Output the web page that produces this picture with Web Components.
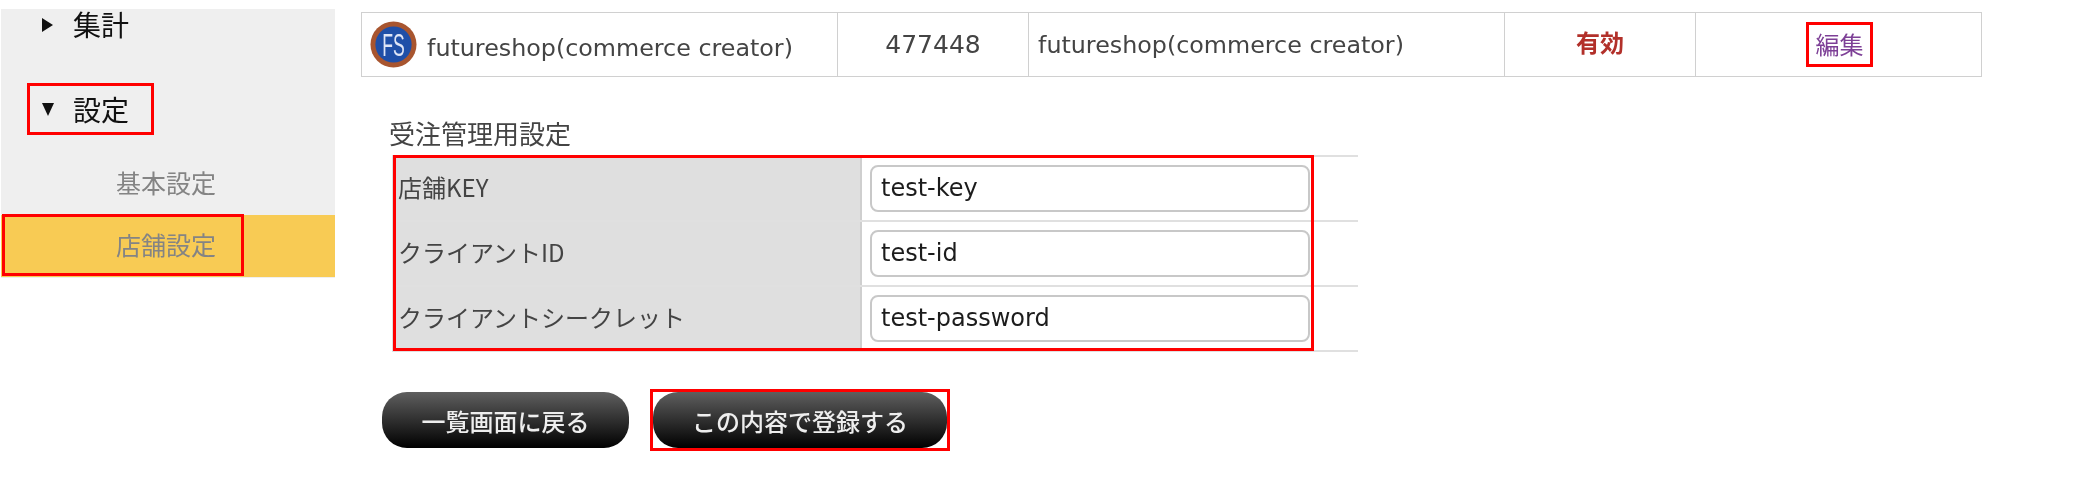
<!DOCTYPE html>
<html lang="ja">
<head>
<meta charset="utf-8">
<title>店舗設定</title>
<style>
  html, body { margin: 0; padding: 0; background: #fff; }
  body { font-family: 'DejaVu Sans', 'Noto Sans CJK JP', sans-serif; }
</style>
</head>
<body>
<app-page>
  <side-nav slot="side">
    <nav-heading>集計</nav-heading>
    <nav-heading open marked>設定</nav-heading>
    <nav-item>基本設定</nav-item>
    <nav-item active marked>店舗設定</nav-item>
  </side-nav>
  <shop-row></shop-row>
  <order-form>
    <form-row label="店舗KEY" value="test-key"></form-row>
    <form-row label="クライアントID" value="test-id"></form-row>
    <form-row label="クライアントシークレット" value="test-password"></form-row>
  </order-form>
  <button-bar>
    <pill-button style="width:247px">一覧画面に戻る</pill-button>
    <pill-button marked style="width:294px">この内容で登録する</pill-button>
  </button-bar>
</app-page>

<script>
const JP = `'Noto Sans CJK JP', sans-serif`;
const LATIN = `'DejaVu Sans', 'Noto Sans CJK JP', sans-serif`;

class AppPage extends HTMLElement {
  constructor() {
    super();
    this.attachShadow({ mode: 'open' });
    this.shadowRoot.innerHTML = `
      <style>
        :host {
          display: flex;
          width: 2075px;
          height: 479px;
          overflow: hidden;
          background: #fff;
          filter: blur(.7px);
        }
        .side { display: block; margin: 9px 26px 0 1px; }
        .main { display: flex; flex-direction: column; width: 1622px; padding-top: 12px; }
      </style>
      <div class="side"><slot name="side"></slot></div>
      <div class="main"><slot></slot></div>
    `;
  }
}

class SideNav extends HTMLElement {
  constructor() {
    super();
    this.attachShadow({ mode: 'open' });
    this.shadowRoot.innerHTML = `
      <style>
        :host {
          display: flex;
          flex-direction: column;
          width: 334px;
          height: 269px;
          background: #efefef;
          font-family: ${JP};
        }
      </style>
      <slot></slot>
    `;
  }
}

class NavHeading extends HTMLElement {
  constructor() {
    super();
    this.attachShadow({ mode: 'open' });
    this.shadowRoot.innerHTML = `
      <style>
        :host {
          display: flex;
          align-items: center;
          position: relative;
          box-sizing: border-box;
          height: 32px;
          padding-left: 41px;
          font-size: 28px;
          color: #111;
        }
        :host([open]) { height: 52px; margin-top: 42px; margin-bottom: 18px; }
        .text { line-height: 32px; padding-bottom: 3px; }
        :host([open]) .text { padding-bottom: 1px; }
        .arrow { width: 0; height: 0; margin-right: 20px; border-style: solid; border-color: transparent; border-width: 7px 0 7px 11px; border-left-color: #111; }
        :host([open]) .arrow { border-width: 13px 6px 0 6px; border-color: #111 transparent transparent; margin-right: 19px; }
        .mark { display: none; position: absolute; left: 26px; top: 0; width: 127px; height: 52px; box-sizing: border-box; border: 3px solid #f00; }
        :host([marked]) .mark { display: block; }
      </style>
      <span class="arrow"></span><span class="text"><slot></slot></span><span class="mark"></span>
    `;
  }
}

class NavItem extends HTMLElement {
  constructor() {
    super();
    this.attachShadow({ mode: 'open' });
    this.shadowRoot.innerHTML = `
      <style>
        :host {
          display: flex;
          align-items: center;
          position: relative;
          height: 62px;
          padding-left: 115px;
          font-size: 25px;
          color: #848484;
        }
        :host([active]) { background: #f8cb54; }
        .text { line-height: 30px; padding-bottom: 5px; }
        .mark { display: none; position: absolute; left: 1px; top: -1px; width: 242px; height: 62px; box-sizing: border-box; border: 3px solid #f00; }
        :host([marked]) .mark { display: block; }
      </style>
      <span class="text"><slot></slot></span><span class="mark"></span>
    `;
  }
}

class ShopRow extends HTMLElement {
  constructor() {
    super();
    this.attachShadow({ mode: 'open' });
    this.shadowRoot.innerHTML = `
      <style>
        :host {
          display: grid;
          grid-template-columns: 476px 191px 476px 191px 285px;
          width: 1621px;
          height: 65px;
          box-sizing: border-box;
          border: 1px solid #d0d0d0;
          font-size: 24px;
          color: #444;
          font-family: ${LATIN};
        }
        div { display: flex; align-items: center; border-right: 1px solid #d0d0d0; min-width: 0; }
        div:last-child { border-right: 0; }
        .c { justify-content: center; }
        .name { padding-left: 8px; gap: 10px; }
        .name span { padding-top: 7px; font-size: 23.8px; }
        .num { font-size: 25px; }
        .plain { padding-left: 9px; font-size: 23.8px; }
        .state { color: #b2302a; font-weight: 700; font-family: ${JP}; line-height: 32px; padding-bottom: 5px; }
        .edit { display: flex; align-items: center; justify-content: center; width: 67px; height: 45px; box-sizing: border-box; padding-bottom: 2px; margin-left: 2px; color: #7d3f96; font-family: ${JP}; border: 3px solid #f00; }
        svg { width: 47px; height: 47px; flex: none; }
      </style>
      <div class="name">
        <svg viewBox="0 0 48 48">
          <circle cx="24" cy="24" r="23.5" fill="#a8552f"/>
          <circle cx="24" cy="24" r="18.5" fill="#1f4fa8"/>
          <text x="24" y="35.5" text-anchor="middle" font-size="32" fill="#dfe5f6" font-family="'Liberation Sans'" textLength="23" lengthAdjust="spacingAndGlyphs">FS</text>
        </svg>
        <span>futureshop(commerce creator)</span>
      </div>
      <div class="c num">477448</div>
      <div class="plain">futureshop(commerce creator)</div>
      <div class="c"><span class="state">有効</span></div>
      <div class="c"><span class="edit">編集</span></div>
    `;
  }
}

class OrderForm extends HTMLElement {
  constructor() {
    super();
    this.attachShadow({ mode: 'open' });
    this.shadowRoot.innerHTML = `
      <style>
        :host { display: block; position: relative; margin: 37px 0 0 28px; width: 969px; font-family: ${JP}; }
        h2 { margin: 0 0 3px 0; font-size: 26px; line-height: 38px; font-weight: 400; color: #444; }
        .rows { position: relative; margin-left: 3px; border-top: 2px solid #e0e0e0; }
        .mark { position: absolute; left: 1px; top: -2px; width: 921px; height: 196px; box-sizing: border-box; border: 3px solid #f00; }
      </style>
      <h2>受注管理用設定</h2>
      <div class="rows"><slot></slot><span class="mark"></span></div>
    `;
  }
}

class FormRow extends HTMLElement {
  constructor() {
    super();
    this.attachShadow({ mode: 'open' });
    this.shadowRoot.innerHTML = `
      <style>
        :host {
          display: grid;
          grid-template-columns: 470px 1fr;
          height: 65px;
          box-sizing: border-box;
          border-bottom: 2px solid #e0e0e0;
        }
        .label { display: flex; align-items: center; padding: 0 0 5px 6px; background: #dfdfdf; border-right: 2px solid #cfcfcf; font-size: 24px; color: #444; }
        .value { display: flex; align-items: center; padding-left: 8px; }
        .box {
          display: flex; align-items: center;
          width: 440px; height: 47px; box-sizing: border-box; padding: 0 0 1px 9px;
          border: 2px solid #c8c8c8; border-radius: 8px; background: #fff;
          font: 24px ${LATIN}; color: #1c1c1c;
        }
      </style>
      <div class="label"></div>
      <div class="value"><div class="box"></div></div>
    `;
  }
  connectedCallback() {
    this.shadowRoot.querySelector('.label').textContent = this.getAttribute('label');
    this.shadowRoot.querySelector('.box').textContent = this.getAttribute('value');
  }
}

class ButtonBar extends HTMLElement {
  constructor() {
    super();
    this.attachShadow({ mode: 'open' });
    this.shadowRoot.innerHTML = `
      <style>
        :host { display: flex; gap: 24px; margin: 40px 0 0 21px; }
      </style>
      <slot></slot>
    `;
  }
}

class PillButton extends HTMLElement {
  constructor() {
    super();
    this.attachShadow({ mode: 'open' });
    this.shadowRoot.innerHTML = `
      <style>
        :host {
          display: flex;
          align-items: center;
          justify-content: center;
          position: relative;
          height: 56px;
          border-radius: 25px;
          background: linear-gradient(#5f5f5f, #000);
          color: #eee;
          font-family: ${JP};
          font-size: 24px;
          font-weight: 500;
        }
        .mark { display: none; position: absolute; left: -3px; top: -3px; right: -3px; bottom: -3px; border: 3px solid #f00; }
        :host([marked]) .mark { display: block; }
      </style>
      <slot></slot><span class="mark"></span>
    `;
  }
}

customElements.define('app-page', AppPage);
customElements.define('side-nav', SideNav);
customElements.define('nav-heading', NavHeading);
customElements.define('nav-item', NavItem);
customElements.define('shop-row', ShopRow);
customElements.define('order-form', OrderForm);
customElements.define('form-row', FormRow);
customElements.define('button-bar', ButtonBar);
customElements.define('pill-button', PillButton);
</script>
</body>
</html>
